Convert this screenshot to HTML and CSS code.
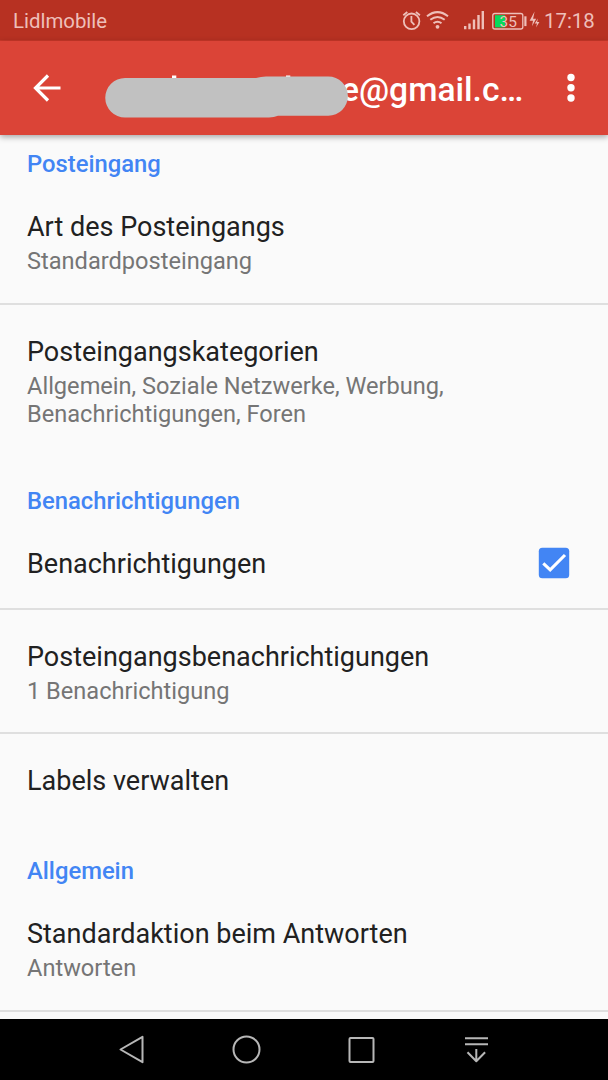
FILE: index.html
```html
<!DOCTYPE html>
<html lang="de">
<head>
<meta charset="utf-8">
<title>Einstellungen</title>
<link rel="stylesheet" href="styles.css">
</head>
<body>
<div class="screen">
  <header class="status-bar">
    <span class="carrier">Lidlmobile</span>
    <svg class="status-icons" width="142" height="40" viewBox="0 0 142 40" fill="none" stroke="#eebfb9" stroke-width="1.8">
      <circle cx="11.6" cy="21.3" r="7.8"/>
      <path d="M11.4 16v5.600l3 3.200M3.300 15.200l4-3.200M19.900 15.200l-4-3.200"/>
      <path d="M27 16.200q10.500-8.200 21 0M30.300 19.800q7.200-5.600 14.400 0M33.500 23.200q4-3 8 0" stroke-width="2"/>
      <circle cx="37.500" cy="26.800" r="1.900" fill="#eebfb9" stroke="none"/>
      <path d="M65.200 26v3.200M69.500 23.500v5.700M74 19.500v9.700M78.500 15v14.200M82.800 11v18.200" stroke-width="2.400"/>
      <rect x="92.800" y="13.500" width="30" height="15.500" rx="2" stroke-width="1.300"/>
      <path d="M95 15.200h10v12.200h-10z" fill="#08d95c" stroke="none"/>
      <path d="M125.400 16.300v9.800" stroke-width="2.200"/>
      <path d="M134.600 11.500l-5 9.200h3.400l-1 5.500 4.200-7.400h-3.100zM138 18.500l-3.300 5h2.300l-1 4 3.400-5.600h-2.300z" fill="#eebfb9" stroke="none"/>
      <text class="battery-level" x="99.500" y="26.700">35</text>
    </svg>
    <span class="clock">17:18</span>
  </header>
  <div class="app-bar">
    <svg class="back" width="28" height="28" viewBox="0 0 28 28" fill="none" stroke="#fff" stroke-width="3.200"><path d="M27.500 14H3M15 1.500L2.500 14 15 26.500"/></svg>
    <svg class="redaction" width="243" height="46" viewBox="0 0 243 46">
      <path d="M67 3.500h4.300v8H67zM181 3.500h4.300v8H181z" fill="#fff"/>
      <path d="M20 6H151Q156 4.500 161 4.500H223.300A19.600 19.600 0 0 1 223.300 43.700H173Q169 45.500 164 45.500H20A19.700 19.700 0 0 1 20 6z" fill="#c1c1c1"/>
    </svg>
    <h1 class="account">e@gmail.c…</h1>
    <svg class="more" width="10" height="30" viewBox="0 0 10 30" fill="#fff"><circle cx="5" cy="4.500" r="3.700"/><circle cx="5" cy="14.800" r="3.700"/><circle cx="5" cy="25" r="3.700"/></svg>
  </div>
  <main class="settings">
    <h2 class="section">Posteingang</h2>
    <div class="item divided"><div class="title">Art des Posteingangs</div><div class="summary">Standardposteingang</div></div>
    <div class="item"><div class="title">Posteingangskategorien</div><div class="summary">Allgemein, Soziale Netzwerke, Werbung,<br>Benachrichtigungen, Foren</div></div>
    <h2 class="section">Benachrichtigungen</h2>
    <div class="item divided with-control">
      <div class="title">Benachrichtigungen</div>
      <svg class="checkbox" width="32" height="32" viewBox="0 0 32 32"><rect x=".8" y=".8" width="30.400" height="30.400" rx="3.500" fill="#4285f4"/><path d="M5.300 16.300l6.900 6.500L27 8" fill="none" stroke="#fff" stroke-width="3.100"/></svg>
    </div>
    <div class="item divided"><div class="title">Posteingangsbenachrichtigungen</div><div class="summary">1 Benachrichtigung</div></div>
    <div class="item single"><div class="title">Labels verwalten</div></div>
    <h2 class="section">Allgemein</h2>
    <div class="item divided"><div class="title">Standardaktion beim Antworten</div><div class="summary">Antworten</div></div>
  </main>
  <nav class="nav-bar">
    <svg width="608" height="61" viewBox="0 0 608 61" fill="none" stroke="#b7b7b7" stroke-width="2" stroke-linejoin="round">
      <path d="M142.500 17.800v25.400L120.500 30.500z"/>
      <circle cx="246.500" cy="30.500" r="13"/>
      <rect x="349.500" y="19" width="24" height="24" rx="1"/>
      <path d="M465 19.300h23M465 25.300h23M476.300 30v12.500M467.500 33.300l8.800 9 8.800-9"/>
    </svg>
  </nav>
</div>
</body>
</html>
```
FILE: styles.css
```css
body {
  margin: 0;
  font-family: Roboto, "Liberation Sans", sans-serif;
}

.screen {
  display: flex;
  flex-direction: column;
  width: 608px;
  height: 1080px;
  overflow: hidden;
  background: #fafafa;
}

.status-bar {
  display: flex;
  align-items: center;
  flex: none;
  box-sizing: border-box;
  height: 41px;
  padding: 0 12px 0 13px;
  background: #b73122;
  border-bottom: 1px solid #c93829;
  color: #eebfb9;
  font-size: 20.4px;
}

.carrier,
.clock {
  padding-top: 2px;
}

.carrier {
  flex: 1;
}

.status-icons {
  flex: none;
  margin-right: 2px;
}

.battery-level {
  fill: #eebfb9;
  stroke: none;
  font-size: 15.5px;
}

.clock {
  width: 52px;
  white-space: nowrap;
}

.app-bar {
  display: flex;
  align-items: center;
  flex: none;
  box-sizing: border-box;
  height: 94px;
  padding: 0 32px 0 33px;
  background: #db4437;
  box-shadow: 0 2px 6px rgba(0, 0, 0, 0.35);
  z-index: 1;
}

.redaction {
  flex: none;
  margin: 14px 0 0 44px;
  overflow: visible;
  z-index: 1;
}

.account {
  flex: 1;
  margin: 4px 0 0 -7px;
  color: #fff;
  font-size: 33.6px;
  line-height: 40px;
  font-weight: 500;
  white-space: nowrap;
}

.settings {
  flex: 1;
  min-height: 0;
  overflow: hidden;
  padding-top: 15px;
}

.section {
  margin: 0;
  padding: 0 27px 3px;
  color: #4285f4;
  font-size: 23.8px;
  line-height: 28px;
  font-weight: 500;
}

.item {
  padding: 31px 27px 27px;
}

.item + .section {
  padding-top: 32px;
}

.section + .item {
  padding: 30px 27px 28px;
}

.item.single {
  padding-bottom: 28px;
}

.with-control {
  display: flex;
  align-items: center;
  justify-content: space-between;
}

.divided {
  border-bottom: 2px solid #dfdfdf;
}

.title {
  color: #212121;
  font-size: 27px;
  line-height: 32px;
}

.summary {
  margin-top: 4px;
  color: #757575;
  font-size: 23.6px;
  line-height: 28px;
}

.checkbox {
  flex: none;
  margin: -3px 11px 0 0;
}

.nav-bar {
  flex: none;
  height: 61px;
  background: #000;
}
```
